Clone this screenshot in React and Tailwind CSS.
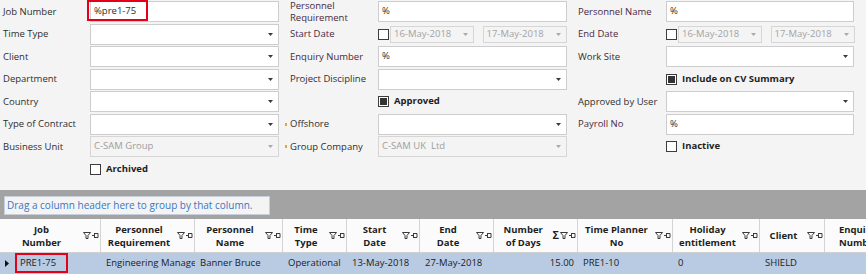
import React from "react";

const MAROON = "text-[#4a2842]";

function Arrow({ muted }) {
  return (
    <svg width="5" height="3" viewBox="0 0 5 3" className="shrink-0">
      <path d="M0 0h5L2.5 3z" fill={muted ? "#a9a9a9" : "#3a3a3a"} />
    </svg>
  );
}

function Box({ checked }) {
  return (
    <span className="flex h-[11px] w-[11px] shrink-0 items-center justify-center border border-[#3c3c3c] bg-white">
      {checked && <span className="h-[7px] w-[7px] bg-[#333]" />}
    </span>
  );
}

function Input({ value, select, disabled, width = "w-[189px]", mark }) {
  return (
    <div className={`relative flex h-[21px] ${width} shrink-0 items-center justify-between border px-[3px] ${disabled ? "border-[#d6d6d6] bg-[#f4f4f4] text-[#9d9d9d]" : "border-[#cdcdcd] bg-white text-[#2b2b2b]"}`}>
      <span className="whitespace-pre">{value}</span>
      {select && <span className="pr-[2px]"><Arrow muted={disabled} /></span>}
      {mark && <span className="absolute left-[194px] top-[8px] h-[3px] w-[2px] bg-[#f0a030]" />}
    </div>
  );
}

function Dates({ first, second }) {
  return (
    <div className="flex w-[189px] items-center">
      <Box />
      <div className="ml-px flex h-[17px] w-[84px] items-center justify-between border border-[#d6d6d6] bg-[#f4f4f4] px-[3px] text-[#a3a3a3]">
        <span>{first}</span>
        <span className="pr-[2px]"><Arrow muted /></span>
      </div>
      <div className="ml-[9px] flex h-[17px] w-[85px] items-center justify-between border border-[#d6d6d6] bg-[#f4f4f4] px-[3px] text-[#a3a3a3]">
        <span>{second}</span>
        <span className="pr-[2px]"><Arrow muted /></span>
      </div>
    </div>
  );
}

function Row({ item, labelW }) {
  if (item.check) {
    return (
      <div className="flex h-[21px] items-center">
        <span className={`${labelW} shrink-0`} />
        <Box checked={item.checked} />
        <span className="ml-[5px] font-bold text-[#1e1e1e]">{item.check}</span>
      </div>
    );
  }
  return (
    <div className="flex h-[21px] items-center">
      <span className={`${labelW} shrink-0 leading-[12px] ${item.maroon ? MAROON : "text-[#2f2f2f]"}`}>
        {item.label}
      </span>
      {item.dates ? (
        <Dates first="16-May-2018" second="17-May-2018" />
      ) : (
        <div className="relative">
          <Input value={item.value} select={item.select} disabled={item.disabled} width={item.width} mark={item.mark} />
          {item.flag && <span className="absolute left-[-3px] top-[-1px] h-[21px] w-[61px] border-2 border-[#e3001b]" />}
        </div>
      )}
    </div>
  );
}

const col1 = [
  { label: "Job Number", value: "%pre1-75", flag: true },
  { label: "Time Type", select: true },
  { label: "Client", select: true },
  { label: "Department", select: true },
  { label: "Country", select: true },
  { label: "Type of Contract", select: true, mark: true },
  { label: "Business Unit", select: true, disabled: true, value: "C-SAM Group", mark: true },
  { check: "Archived" },
];

const col2 = [
  { label: <>Personnel<br />Requirement</>, value: "%", maroon: true },
  { label: "Start Date", dates: true, maroon: true },
  { label: "Enquiry Number", value: "%", maroon: true },
  { label: "Project Discipline", select: true },
  { check: "Approved", checked: true },
  { label: "Offshore", select: true },
  { label: "Group Company", select: true, disabled: true, value: "C-SAM UK  Ltd" },
];

const col3 = [
  { label: "Personnel Name", value: "%", maroon: true, width: "w-[188px]" },
  { label: "End Date", dates: true, maroon: true },
  { label: "Work Site", select: true, width: "w-[188px]" },
  { check: "Include on CV Summary", checked: true },
  { label: "Approved by User", select: true, width: "w-[188px]" },
  { label: "Payroll No", value: "%", maroon: true, width: "w-[188px]" },
  { check: "Inactive" },
];

function FilterPin() {
  return (
    <svg width="16" height="7" viewBox="0 0 16 7" className="shrink-0">
      <path d="M0.5 0.5h7L5 3.5v3H3v-3z" fill="none" stroke="#3a3a3a" strokeWidth="1" />
      <path d="M9 3.5h2.5M11.5 1v5M11.5 1.5h3.5v4h-3.5" fill="none" stroke="#3a3a3a" strokeWidth="1" />
    </svg>
  );
}

const headers = [
  { w: "w-[101px]", t: <>Job<br />Number</> },
  { w: "w-[94px]", t: <>Personnel<br />Requirement</> },
  { w: "w-[88px]", t: <>Personnel<br />Name</> },
  { w: "w-[64px]", t: <>Time<br />Type</> },
  { w: "w-[73px]", t: <>Start<br />Date</> },
  { w: "w-[74px]", t: <>End<br />Date</> },
  { w: "w-[84px]", t: <>Number<br />of Days</>, sigma: true },
  { w: "w-[95px]", t: <>Time Planner<br />No</> },
  { w: "w-[87px]", t: <>Holiday<br />entitlement</> },
  { w: "w-[65px]", t: "Client" },
  { w: "w-[60px]", t: <>Enquiry<br />Number</>, last: true },
];

const cells = [
  { w: "w-[94px]", t: "Engineering Manager" },
  { w: "w-[88px]", t: "Banner Bruce" },
  { w: "w-[64px]", t: "Operational" },
  { w: "w-[73px]", t: "13-May-2018" },
  { w: "w-[74px]", t: "27-May-2018" },
  { w: "w-[84px]", t: "15.00", right: true },
  { w: "w-[95px]", t: "PRE1-10" },
  { w: "w-[87px]", t: "0" },
  { w: "w-[65px]", t: "SHIELD" },
  { w: "w-[60px]", t: "" },
];

export default function App() {
  return (
    <div className="h-[274px] w-[866px] overflow-hidden bg-[#f4f4f4] text-[9.5px] [font-family:'Open_Sans',sans-serif]">
      <div className="flex h-[190px] pt-px">
        <div className="flex w-[290px] shrink-0 flex-col gap-[1.5px] pl-[3px]">
          {col1.map((it, i) => <Row key={i} item={it} labelW="w-[87px]" />)}
        </div>
        <div className="flex w-[288px] shrink-0 flex-col gap-[1.5px]">
          {col2.map((it, i) => <Row key={i} item={it} labelW="w-[88px]" />)}
        </div>
        <div className="flex flex-1 flex-col gap-[1.5px]">
          {col3.map((it, i) => <Row key={i} item={it} labelW="w-[88px]" />)}
        </div>
      </div>

      <div className="h-[29px] bg-[#a3a3a3] pl-[4px] pt-[6px]">
        <div className="flex h-[19px] w-[266px] items-center border border-[#c6cfda] bg-[#f4f4f4] pl-[2px] text-[10px] text-[#3b76c4]">
          Drag a column header here to group by that column.
        </div>
      </div>

      <div className="flex h-[34px] border-b border-[#d0d0d0] bg-[#fbfbfb]">
        {headers.map((h, i) => (
          <div key={i} className={`flex ${h.w} shrink-0 items-center border-r border-[#d4d4d4] ${h.last ? "pl-[14px]" : "pr-[1px]"}`}>
            <div className={`flex-1 font-bold leading-[13px] text-[#1e1e1e] whitespace-nowrap ${h.last ? "text-left" : "text-center"}`}>{h.t}</div>
            {h.sigma && <span className="mr-[1px] text-[11px] font-bold text-[#222]">Σ</span>}
            {!h.last && <FilterPin />}
          </div>
        ))}
      </div>

      <div className="relative flex h-[21px] items-center bg-[#b8cbe3] text-[#1c1c1c]">
        <div className="flex w-[13px] shrink-0 justify-center pl-[1px]">
          <svg width="4" height="7" viewBox="0 0 4 7"><path d="M0 0l4 3.5L0 7z" fill="#111" /></svg>
        </div>
        <div className="w-[88px] shrink-0 pl-[7px]">PRE1-75</div>
        {cells.map((c, i) => (
          <div key={i} className={`${c.w} shrink-0 overflow-hidden whitespace-nowrap ${c.right ? "pr-[4px] text-right" : "pl-[5px]"}`}>
            {c.t}
          </div>
        ))}
        <span className="absolute left-[15px] top-0 h-[20px] w-[53px] border-2 border-[#e3001b]" />
      </div>
    </div>
  );
}
